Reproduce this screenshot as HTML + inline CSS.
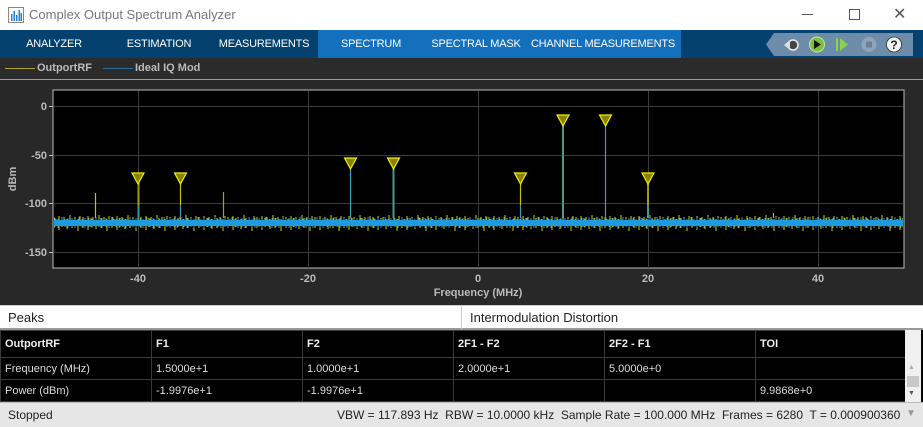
<!DOCTYPE html>
<html><head><meta charset="utf-8"><style>
*{margin:0;padding:0;box-sizing:border-box}
body{width:923px;height:427px;overflow:hidden;background:#282828;font-family:"Liberation Sans",sans-serif;position:relative}
.abs{position:absolute}
.tab{position:absolute;top:30px;height:28px;line-height:28px;color:#fff;font-size:11px;text-align:center;white-space:nowrap;letter-spacing:-0.2px}
td{border:1px solid #3a3a3a;color:#ddd;font-size:11px;padding:0 4px;height:22px;vertical-align:middle}
</style></head><body>
<div class="abs" style="left:0;top:0;width:923px;height:30px;background:#fff"></div>
<svg class="abs" style="left:8px;top:7px" width="16" height="16"><rect x="0.5" y="0.5" width="15" height="15" fill="#fff" stroke="#888"/><g fill="#2a7fd0"><rect x="3" y="7" width="1.5" height="7"/><rect x="5.5" y="4" width="1.5" height="10"/><rect x="8" y="8" width="1.5" height="6"/><rect x="10.5" y="3" width="1.5" height="11"/><rect x="12.5" y="6" width="1.5" height="8"/></g></svg>
<div class="abs" style="left:29px;top:7px;font-size:13px;color:#777">Complex Output Spectrum Analyzer</div>
<div class="abs" style="left:802px;top:14px;width:11px;height:1px;background:#555"></div>
<div class="abs" style="left:849px;top:9px;width:11px;height:11px;border:1px solid #555"></div>
<div class="abs" style="left:893px;top:4px;font-size:16px;color:#555">✕</div>

<div class="abs" style="left:0;top:30px;width:923px;height:28px;background:#04416f"></div>
<div class="abs" style="left:318px;top:30px;width:363px;height:28px;background:#1470bd"></div>
<div class="tab" style="left:0;width:108px">ANALYZER</div>
<div class="tab" style="left:108px;width:102px">ESTIMATION</div>
<div class="tab" style="left:210px;width:108px">MEASUREMENTS</div>
<div class="tab" style="left:318px;width:106px">SPECTRUM</div>
<div class="tab" style="left:424px;width:104px">SPECTRAL MASK</div>
<div class="tab" style="left:528px;width:150px">CHANNEL MEASUREMENTS</div>
<svg class="abs" style="left:766px;top:33px" width="148" height="23">
<polygon points="8,0 147,0 147,23 8,23 0,11.5" fill="#6c8ca9"/>
<circle cx="27" cy="12" r="5" fill="#444" stroke="#eee" stroke-width="1.5"/><polygon points="18,12 24,7 24,17" fill="#ddd"/>
<circle cx="51" cy="11.5" r="7.5" fill="#7dc03f" stroke="#c8e6a0"/><polygon points="48,7 48,16 55,11.5" fill="#111"/>
<rect x="70" y="5" width="2" height="13" fill="#8cd050"/><polygon points="74,5 74,18 82,11.5" fill="#8cd050"/>
<circle cx="103" cy="11.5" r="7.5" fill="#8fa4b8"/><rect x="100" y="8.5" width="6" height="6" fill="#6c7f92"/>
<circle cx="128" cy="11.5" r="7.5" fill="#f4f4f4" stroke="#333" stroke-width=".8"/><text x="128" y="16" font-size="12" font-weight="bold" text-anchor="middle" fill="#222" font-family="Liberation Sans">?</text>
</svg>

<div class="abs" style="left:0;top:58px;width:923px;height:22px;background:#2b2b2b;border-bottom:1px solid #999"></div>
<div class="abs" style="left:5px;top:68px;width:30px;height:1px;background:#b0a030"></div>
<div class="abs" style="left:37px;top:62px;font-size:11px;color:#bbb;font-weight:bold">OutportRF</div>
<div class="abs" style="left:103px;top:68px;width:30px;height:1px;background:#2a6a9a"></div>
<div class="abs" style="left:135px;top:62px;font-size:11px;color:#bbb;font-weight:bold">Ideal IQ Mod</div>

<svg class="abs" style="left:0;top:0" width="923" height="305">
<defs>
<pattern id="ny" x="53" y="212" width="29" height="20" patternUnits="userSpaceOnUse">
<g stroke="#d8d000" stroke-width="1"><line x1="1" y1="5" x2="1" y2="16"/><line x1="3" y1="7" x2="3" y2="14"/><line x1="6" y1="4" x2="6" y2="18"/><line x1="9" y1="6" x2="9" y2="15"/><line x1="11" y1="5" x2="11" y2="13"/><line x1="14" y1="7" x2="14" y2="17"/><line x1="17" y1="3" x2="17" y2="14"/><line x1="19" y1="6" x2="19" y2="16"/><line x1="22" y1="5" x2="22" y2="13"/><line x1="25" y1="7" x2="25" y2="19"/><line x1="27" y1="4" x2="27" y2="14"/></g>
</pattern>
<pattern id="nb" x="53" y="212" width="17" height="20" patternUnits="userSpaceOnUse">
<rect x="0" y="8" width="17" height="6" fill="#1e9be0"/>
<g stroke="#1e9be0"><line x1="2" y1="6" x2="2" y2="15"/><line x1="5" y1="7" x2="5" y2="16"/><line x1="9" y1="5" x2="9" y2="14"/><line x1="12" y1="7" x2="12" y2="15"/><line x1="15" y1="6" x2="15" y2="16"/></g>
</pattern></defs>
<rect x="53" y="90" width="851" height="178" fill="#000" stroke="#bbb"/>
<g stroke="#3c3c3c" stroke-width="1">
<line x1="138.5" y1="91" x2="138.5" y2="268"/><line x1="308.5" y1="91" x2="308.5" y2="268"/><line x1="478.5" y1="91" x2="478.5" y2="268"/><line x1="648.5" y1="91" x2="648.5" y2="268"/><line x1="818.5" y1="91" x2="818.5" y2="268"/>
<line x1="54" y1="106.5" x2="903" y2="106.5"/><line x1="54" y1="155.5" x2="903" y2="155.5"/><line x1="54" y1="203.5" x2="903" y2="203.5"/><line x1="54" y1="252.5" x2="903" y2="252.5"/>
</g>
<rect x="54" y="212" width="849" height="20" fill="url(#ny)"/>
<rect x="54" y="212" width="849" height="20" fill="url(#nb)"/>
<g stroke-width="1.2">
<line x1="95.5" y1="193" x2="95.5" y2="218" stroke="#c8c000"/>
<line x1="223.5" y1="192" x2="223.5" y2="218" stroke="#b0a000"/>
<line x1="773.5" y1="213" x2="773.5" y2="218" stroke="#c8c000"/>
<line x1="138.5" y1="180" x2="138.5" y2="205" stroke="#a09a10" stroke-width="2"/><line x1="138.5" y1="205" x2="138.5" y2="218" stroke="#3a9aa0" stroke-width="2"/>
<line x1="180.5" y1="180" x2="180.5" y2="205" stroke="#c8c000"/><line x1="180.5" y1="205" x2="180.5" y2="218" stroke="#3aa0c0"/>
<line x1="350.5" y1="165" x2="350.5" y2="218" stroke="#3aa0c0"/>
<line x1="393.5" y1="165" x2="393.5" y2="218" stroke="#4a9a90" stroke-width="2"/>
<line x1="520.5" y1="180" x2="520.5" y2="205" stroke="#c8c000"/><line x1="520.5" y1="205" x2="520.5" y2="218" stroke="#3aa0c0"/>
<line x1="563" y1="122" x2="563" y2="218" stroke="#4a9a90" stroke-width="2"/>
<line x1="605.5" y1="122" x2="605.5" y2="218" stroke="#3aa0b0"/>
<line x1="648" y1="180" x2="648" y2="205" stroke="#a09a10" stroke-width="2"/><line x1="648" y1="205" x2="648" y2="218" stroke="#3a9aa0" stroke-width="2"/>
</g>
<g fill="#8a8200" stroke="#f0f000" stroke-width="1.2">
<polygon points="132,173 144,173 138,184"/><polygon points="174.5,173 186.5,173 180.5,184"/>
<polygon points="344.5,158 356.5,158 350.5,169"/><polygon points="387.5,158 399.5,158 393.5,169"/>
<polygon points="514.5,173 526.5,173 520.5,184"/><polygon points="557,115 569,115 563,126"/>
<polygon points="599.5,115 611.5,115 605.5,126"/><polygon points="642,173 654,173 648,184"/>
</g>
<g stroke="#bbb"><line x1="49" y1="106.5" x2="53" y2="106.5"/><line x1="49" y1="155.5" x2="53" y2="155.5"/><line x1="49" y1="203.5" x2="53" y2="203.5"/><line x1="49" y1="252.5" x2="53" y2="252.5"/></g>
<g font-family="Liberation Sans" font-size="11" fill="#bbb" font-weight="bold" text-anchor="end">
<text x="47" y="110">0</text><text x="47" y="159">-50</text><text x="47" y="207">-100</text><text x="47" y="256">-150</text></g>
<g font-family="Liberation Sans" font-size="11" fill="#bbb" font-weight="bold" text-anchor="middle">
<text x="138" y="282">-40</text><text x="308" y="282">-20</text><text x="478" y="282">0</text><text x="648" y="282">20</text><text x="818" y="282">40</text>
<text x="478" y="296">Frequency (MHz)</text>
<text transform="translate(16,179) rotate(-90)">dBm</text></g>
</svg>

<div class="abs" style="left:0;top:305px;width:923px;height:25px;background:#fff;border-top:1px solid #ccc;border-bottom:2px solid #999"></div>
<div class="abs" style="left:461px;top:306px;width:1px;height:23px;background:#ccc"></div>
<div class="abs" style="left:8px;top:310px;font-size:13px;color:#222">Peaks</div>
<div class="abs" style="left:470px;top:310px;font-size:13px;color:#222">Intermodulation Distortion</div>

<div class="abs" style="left:0;top:330px;width:923px;height:72px;background:#000"></div>
<table class="abs" style="left:0;top:330px;border-collapse:collapse;width:906px;table-layout:fixed">
<tr style="height:27px"><td style="width:151px;font-weight:bold;color:#eee">OutportRF</td><td style="width:151px;font-weight:bold;color:#eee">F1</td><td style="width:151px;font-weight:bold;color:#eee">F2</td><td style="width:151px;font-weight:bold;color:#eee">2F1 - F2</td><td style="width:151px;font-weight:bold;color:#eee">2F2 - F1</td><td style="font-weight:bold;color:#eee">TOI</td></tr>
<tr><td>Frequency (MHz)</td><td>1.5000e+1</td><td>1.0000e+1</td><td>2.0000e+1</td><td>5.0000e+0</td><td></td></tr>
<tr><td>Power (dBm)</td><td>-1.9976e+1</td><td>-1.9976e+1</td><td></td><td></td><td>9.9868e+0</td></tr>
</table>
<div class="abs" style="left:905px;top:330px;width:16px;height:72px;background:#f0f0f0"></div>
<div class="abs" style="left:907px;top:376px;width:12px;height:11px;background:#c8c8c8"></div>
<div class="abs" style="left:908px;top:364px;font-size:7px;color:#aaa">▲</div>
<div class="abs" style="left:908px;top:390px;font-size:7px;color:#555">▼</div>

<div class="abs" style="left:0;top:402px;width:923px;height:25px;background:#e6e6e6;border-top:1px solid #bbb"></div>
<div class="abs" style="left:8px;top:408px;font-size:12px;color:#222">Stopped</div>
<div class="abs" style="left:337px;top:408px;font-size:12px;color:#222;white-space:nowrap">VBW = 117.893 Hz&nbsp; RBW = 10.0000 kHz&nbsp; Sample Rate = 100.000 MHz&nbsp; Frames = 6280&nbsp; T = 0.000900360</div>
<div class="abs" style="left:906px;top:408px;font-size:10px;color:#999">▼</div>
</body></html>
